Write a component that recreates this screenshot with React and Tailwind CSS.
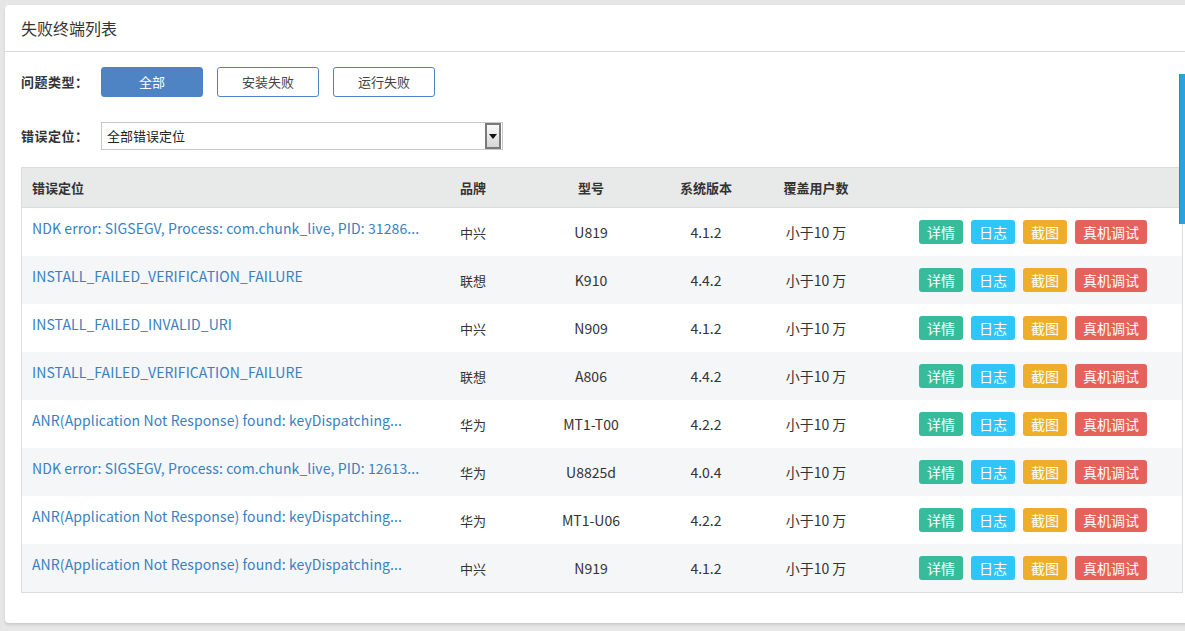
import React, { useState } from 'react';

const rows = [
  { err: 'NDK error: SIGSEGV, Process: com.chunk_live, PID: 31286...', brand: '中兴', model: 'U819', ver: '4.1.2' },
  { err: 'INSTALL_FAILED_VERIFICATION_FAILURE', brand: '联想', model: 'K910', ver: '4.4.2' },
  { err: 'INSTALL_FAILED_INVALID_URI', brand: '中兴', model: 'N909', ver: '4.1.2' },
  { err: 'INSTALL_FAILED_VERIFICATION_FAILURE', brand: '联想', model: 'A806', ver: '4.4.2' },
  { err: 'ANR(Application Not Response) found: keyDispatching...', brand: '华为', model: 'MT1-T00', ver: '4.2.2' },
  { err: 'NDK error: SIGSEGV, Process: com.chunk_live, PID: 12613...', brand: '华为', model: 'U8825d', ver: '4.0.4' },
  { err: 'ANR(Application Not Response) found: keyDispatching...', brand: '华为', model: 'MT1-U06', ver: '4.2.2' },
  { err: 'ANR(Application Not Response) found: keyDispatching...', brand: '中兴', model: 'N919', ver: '4.1.2' },
];

const font = { fontFamily: '"Noto Sans CJK SC", "Noto Sans", sans-serif' };

const App = () => {
  const [type, setType] = useState('all'); // 'all' | 'install' | 'run'

  const typeBtn = (key, label) => (
    <button
      onClick={() => setType(key)}
      className={`w-[102px] h-[30px] rounded-[3px] border text-[13px] ${type === key ? 'bg-[#4f84c4] border-[#4f84c4] text-white' : 'bg-white border-[#4f84c4] text-[#444]'}`}
    >
      {label}
    </button>
  );

  return (
    <div className="w-[1185px] h-[631px] overflow-hidden bg-[#e6e6e6] relative" style={font}>
      <div className="ml-[5px] mt-[5px] w-[1194px] h-[618px] bg-white rounded-[4px] shadow-[0_2px_3px_rgba(0,0,0,0.12)]">
        <div className="h-[47px] border-b border-[#dcdcdc] flex items-center pl-4 text-[16px] text-[#333]">
          失败终端列表
        </div>

        <div className="px-4 pt-[15px]">
          <div className="flex items-center h-[30px]">
            <span className="w-[80px] text-[13px] font-bold text-[#333] tracking-[0.5px]">问题类型：</span>
            <div className="flex gap-[14px]">
              {typeBtn('all', '全部')}
              {typeBtn('install', '安装失败')}
              {typeBtn('run', '运行失败')}
            </div>
          </div>

          <div className="flex items-center h-[28px] mt-[25px]">
            <span className="w-[80px] text-[13px] font-bold text-[#333] tracking-[0.5px]">错误定位：</span>
            <div className="w-[402px] h-[28px] border border-[#c8c8c8] flex items-center justify-between pl-[5px] pr-[1px] text-[13px] text-[#222]">
              <span>全部错误定位</span>
              <div className="w-[16px] h-[26px] border-2 border-[#7a7a7a] bg-gradient-to-b from-[#fafafa] to-[#d6d6d6] flex items-center justify-center">
                <svg width="8" height="6" viewBox="0 0 8 6"><path d="M0 1h8L4 6z" fill="#111" /></svg>
              </div>
            </div>
          </div>

          <div className="mt-[17px] border border-[#dcdcdc] text-[14px]">
            <div className="h-[40px] bg-[#e8e9e9] border-b border-[#dcdcdc] flex items-center text-[13px] font-bold text-[#333]">
              <div className="w-[429px] pl-[10px]">错误定位</div>
              <div className="w-[80px] pl-[9px]">品牌</div>
              <div className="w-[120px] text-center">型号</div>
              <div className="w-[110px] text-center">系统版本</div>
              <div className="w-[110px] text-center">覆盖用户数</div>
            </div>
            {rows.map((r, i) => (
              <div key={i} className={`h-[48px] flex items-center ${i % 2 ? 'bg-[#f5f6f8]' : 'bg-white'}`}>
                <div className="w-[429px] pl-[10px] self-start pt-[10px] leading-[20px] text-[#3a7fc1] tracking-[0.1px] truncate">{r.err}</div>
                <div className="w-[80px] pl-[9px] pt-[2px] text-[13px] text-[#333]">{r.brand}</div>
                <div className="w-[120px] text-center text-[#333]">{r.model}</div>
                <div className="w-[110px] text-center text-[#333]">{r.ver}</div>
                <div className="w-[110px] text-center text-[#333]">小于10 万</div>
                <div className="flex gap-[8px] pl-[48px]">
                  <ActBtn color="bg-[#37bc9b]">详情</ActBtn>
                  <ActBtn color="bg-[#30c5f9]">日志</ActBtn>
                  <ActBtn color="bg-[#efae29]">截图</ActBtn>
                  <ActBtn color="bg-[#e5625c]">真机调试</ActBtn>
                </div>
              </div>
            ))}
          </div>
        </div>
      </div>

      <div className="absolute right-0 top-[74px] w-[6px] h-[150px] bg-[#27a3e0] border-l border-[#1b8fc8]" />
    </div>
  );
};

function ActBtn({ color, children }) {
  return (
    <span className={`${color} h-[24px] px-[8px] rounded-[3px] text-white text-[14px] leading-[24px]`}>
      {children}
    </span>
  );
}

export default App;
